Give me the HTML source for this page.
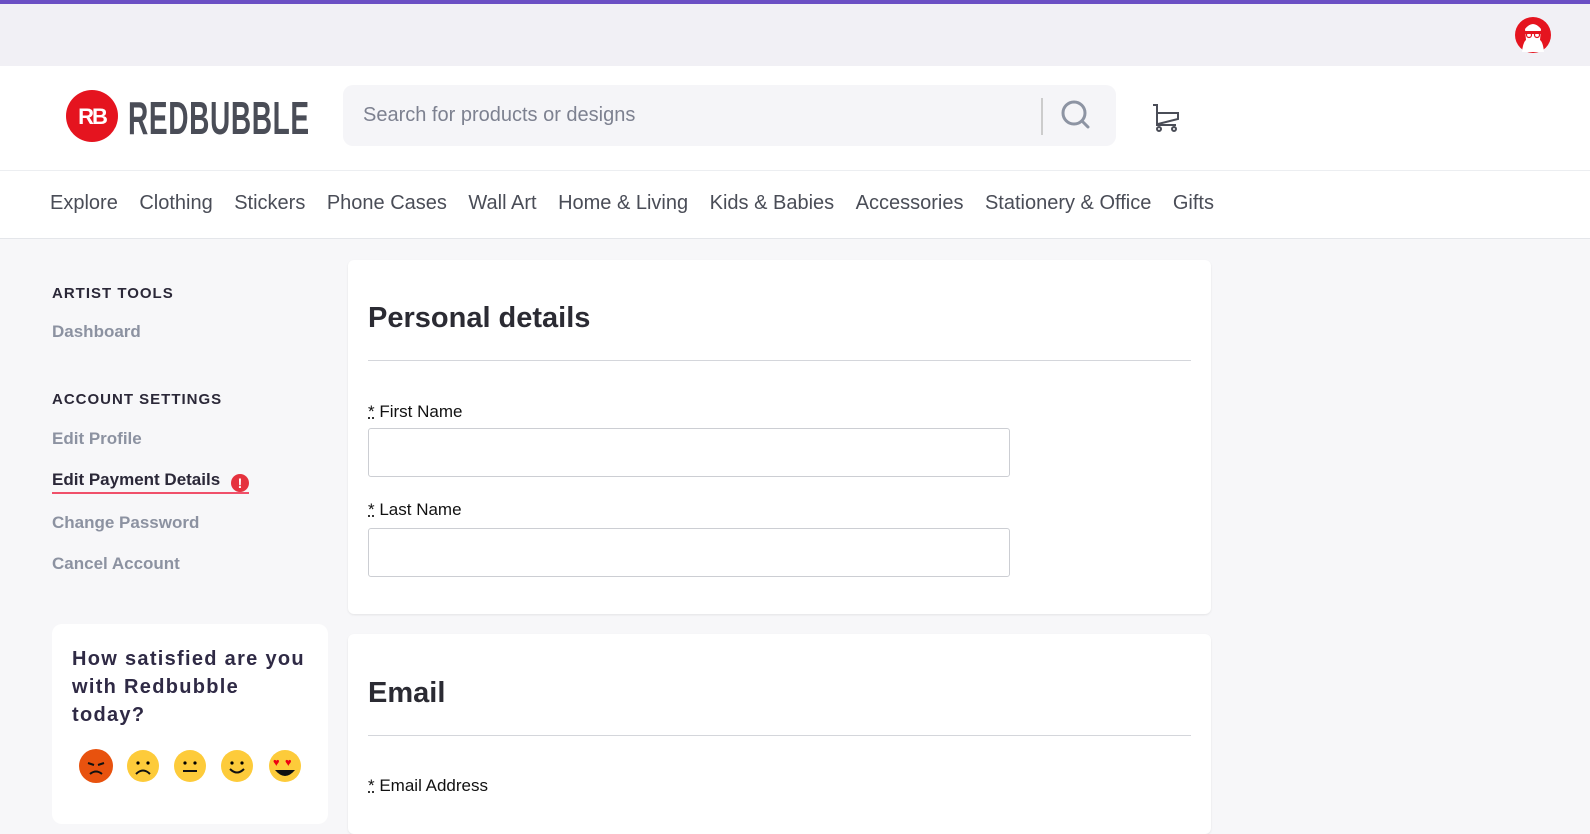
<!DOCTYPE html>
<html><head><meta charset="utf-8"><style>
*{box-sizing:border-box;margin:0;padding:0}
body{width:1590px;height:807px;overflow:hidden;background:#f7f7f9;font-family:"Liberation Sans",sans-serif;position:relative}
.a{position:absolute}
</style></head><body>
<div class="a" style="left:0;top:0;width:1590px;height:4px;background:#6b4fc4"></div>
<div class="a" style="left:0;top:4px;width:1590px;height:62px;background:#f1f0f5"></div>
<svg class="a" style="left:1514px;top:16px" width="38" height="38" viewBox="0 0 38 38"><circle cx="19" cy="19" r="18" fill="#e5141f"/><path d="M8 36 Q9 26 12 24 L11 13 Q19 3 27 13 L26 24 Q29 26 30 36 Z" fill="#fff"/><rect x="11" y="15" width="16" height="3" fill="#e5141f"/><circle cx="15" cy="19" r="2.5" fill="none" stroke="#e5141f" stroke-width="1.2"/><circle cx="23" cy="19" r="2.5" fill="none" stroke="#e5141f" stroke-width="1.2"/></svg>
<div class="a" style="left:0;top:66px;width:1590px;height:104px;background:#fff"></div>
<svg class="a" style="left:66px;top:90px" width="52" height="52" viewBox="0 0 52 52"><circle cx="26" cy="26" r="26" fill="#e5141f"/><text x="26" y="34" text-anchor="middle" font-family="Liberation Sans" font-weight="bold" font-size="22" fill="#fff" letter-spacing="-2">RB</text></svg>
<div class="a" style="left:128px;top:94px;font-size:46px;font-weight:bold;color:#4a4d57;transform:scaleX(0.61);transform-origin:left top;letter-spacing:1px;line-height:48px">REDBUBBLE</div>
<div class="a" style="left:343px;top:85px;width:773px;height:61px;background:#f5f5f8;border-radius:10px"></div>
<div class="a" style="left:363px;top:104px;font-size:20px;color:#7d8190">Search for products or designs</div>
<div class="a" style="left:1041px;top:98px;width:2px;height:37px;background:#ccc"></div>
<svg class="a" style="left:1059px;top:98px" width="34" height="34" viewBox="0 0 34 34"><circle cx="15" cy="15" r="11" fill="none" stroke="#8d94a3" stroke-width="3"/><path d="M23 23l6 6" stroke="#8d94a3" stroke-width="3" stroke-linecap="round"/></svg>
<svg class="a" style="left:1152px;top:103px" width="30" height="30" viewBox="0 0 30 30" fill="none" stroke="#4a4d57" stroke-width="2"><path d="M1 2h4v20h19"/><path d="M6 10h20v6L6 21"/><circle cx="7" cy="26" r="2"/><circle cx="22" cy="26" r="2"/></svg>
<div class="a" style="left:0;top:170px;width:1590px;height:69px;background:#fff;border-top:1px solid #eceef1;border-bottom:1px solid #e4e6ea"></div>
<div class="a" style="left:50px;top:192px;font-size:20px;color:#4a4d57;white-space:nowrap">
<span style="margin-right:21.5px">Explore</span><span style="margin-right:21.5px">Clothing</span><span style="margin-right:21.5px">Stickers</span><span style="margin-right:21.5px">Phone Cases</span><span style="margin-right:21.5px">Wall Art</span><span style="margin-right:21.5px">Home &amp; Living</span><span style="margin-right:21.5px">Kids &amp; Babies</span><span style="margin-right:21.5px">Accessories</span><span style="margin-right:21.5px">Stationery &amp; Office</span><span>Gifts</span></div>
<div class="a" style="left:52px;top:285px;font-size:15px;font-weight:bold;color:#2b2838;letter-spacing:1px">ARTIST TOOLS</div>
<div class="a" style="left:52px;top:322px;font-size:17px;font-weight:bold;color:#8c92a1">Dashboard</div>
<div class="a" style="left:52px;top:391px;font-size:15px;font-weight:bold;color:#2b2838;letter-spacing:1px">ACCOUNT SETTINGS</div>
<div class="a" style="left:52px;top:429px;font-size:17px;font-weight:bold;color:#8c92a1">Edit Profile</div>
<div class="a" style="left:52px;top:470px;font-size:17px;font-weight:bold;color:#2b2838">Edit Payment Details</div>
<div class="a" style="left:231px;top:474px;width:18px;height:18px;border-radius:50%;background:#e5323e;color:#fff;font-size:14px;font-weight:bold;text-align:center;line-height:18px">!</div>
<div class="a" style="left:52px;top:492px;width:197px;height:2px;background:#f0506a"></div>
<div class="a" style="left:52px;top:513px;font-size:17px;font-weight:bold;color:#8c92a1">Change Password</div>
<div class="a" style="left:52px;top:554px;font-size:17px;font-weight:bold;color:#8c92a1">Cancel Account</div>
<div class="a" style="left:52px;top:624px;width:276px;height:200px;background:#fff;border-radius:10px"></div>
<div class="a" style="left:72px;top:645px;width:245px;font-size:20px;font-weight:bold;color:#2f2a45;line-height:28px;letter-spacing:1.3px">How satisfied are you with Redbubble today?</div>
<svg class="a" style="left:76px;top:746px" width="230" height="40" viewBox="0 0 230 40">
<circle cx="20" cy="20" r="17" fill="#e8520e"/><path d="M12 17l6 2M28 17l-6 2M14 28q6-5 12 0" stroke="#111" stroke-width="2" fill="none"/>
<circle cx="67" cy="20" r="16" fill="#fdcb3a"/><circle cx="62" cy="17" r="1.6"/><circle cx="72" cy="17" r="1.6"/><path d="M60 28q7-7 14 0" stroke="#111" stroke-width="2" fill="none"/>
<circle cx="114" cy="20" r="16" fill="#fdcb3a"/><circle cx="109" cy="17" r="1.6"/><circle cx="119" cy="17" r="1.6"/><path d="M107 25h14" stroke="#111" stroke-width="2"/>
<circle cx="161" cy="20" r="16" fill="#fdcb3a"/><circle cx="156" cy="17" r="1.6"/><circle cx="166" cy="17" r="1.6"/><path d="M154 23q7 7 14 0" stroke="#111" stroke-width="2" fill="none"/>
<circle cx="209" cy="20" r="16" fill="#fdcb3a"/><text x="197" y="20" font-size="11" fill="#e01">♥</text><text x="209" y="20" font-size="11" fill="#e01">♥</text><path d="M199 24q10 12 20 0z" fill="#111"/>
</svg>
<div class="a" style="left:348px;top:260px;width:863px;height:354px;background:#fff;border-radius:6px;box-shadow:0 1px 2px rgba(0,0,0,.08)"></div>
<div class="a" style="left:368px;top:302px;font-size:29px;font-weight:bold;color:#2b2b33">Personal details</div>
<div class="a" style="left:368px;top:360px;width:823px;height:1px;background:#d4d6db"></div>
<div class="a" style="left:368px;top:402px;font-size:17px;color:#111"><span style="text-decoration:underline dotted">*</span> First Name</div>
<div class="a" style="left:368px;top:428px;width:642px;height:49px;border:1px solid #ccced3;border-radius:3px"></div>
<div class="a" style="left:368px;top:500px;font-size:17px;color:#111"><span style="text-decoration:underline dotted">*</span> Last Name</div>
<div class="a" style="left:368px;top:528px;width:642px;height:49px;border:1px solid #ccced3;border-radius:3px"></div>
<div class="a" style="left:348px;top:634px;width:863px;height:200px;background:#fff;border-radius:6px;box-shadow:0 1px 2px rgba(0,0,0,.08)"></div>
<div class="a" style="left:368px;top:677px;font-size:29px;font-weight:bold;color:#2b2b33">Email</div>
<div class="a" style="left:368px;top:735px;width:823px;height:1px;background:#d4d6db"></div>
<div class="a" style="left:368px;top:776px;font-size:17px;color:#111"><span style="text-decoration:underline dotted">*</span> Email Address</div>
</body></html>
